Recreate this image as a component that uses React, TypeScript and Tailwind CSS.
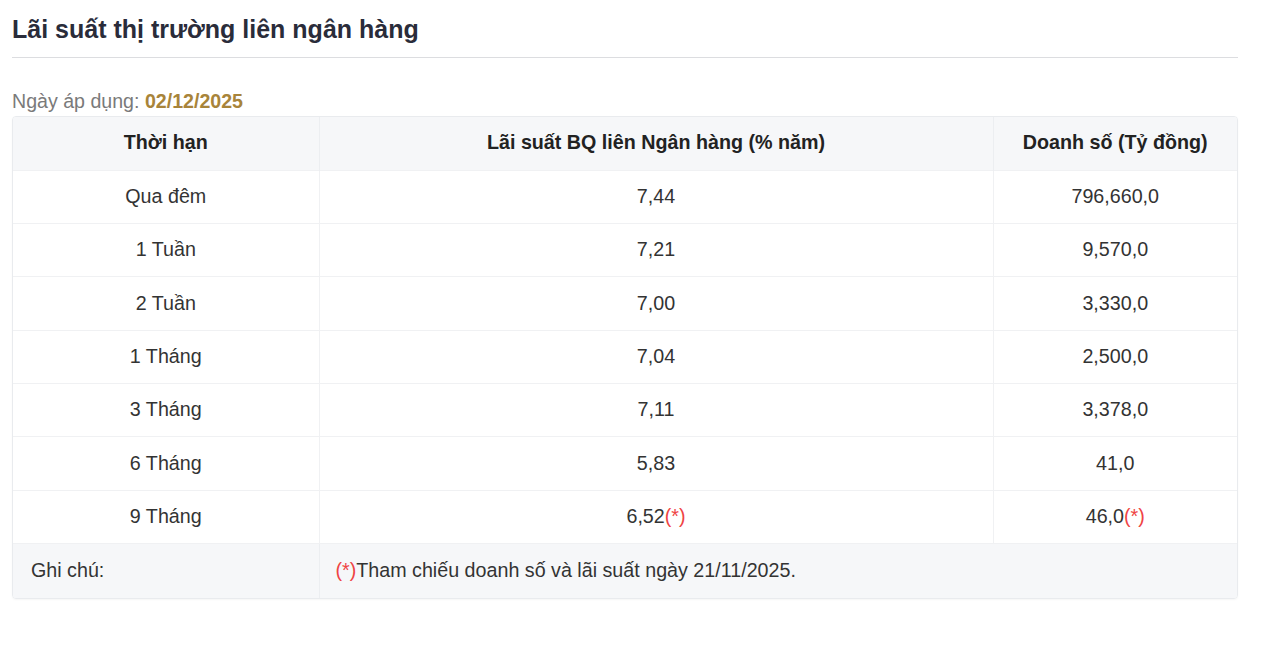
const rows: { term: string; rate: string; volume: string; rateNote?: boolean; volNote?: boolean }[] = [
  { term: 'Qua đêm', rate: '7,44', volume: '796,660,0' },
  { term: '1 Tuần', rate: '7,21', volume: '9,570,0' },
  { term: '2 Tuần', rate: '7,00', volume: '3,330,0' },
  { term: '1 Tháng', rate: '7,04', volume: '2,500,0' },
  { term: '3 Tháng', rate: '7,11', volume: '3,378,0' },
  { term: '6 Tháng', rate: '5,83', volume: '41,0' },
  { term: '9 Tháng', rate: '6,52', volume: '46,0', rateNote: true, volNote: true },
];

const Star = () => <span className="text-[#ef4444]">(*)</span>;

export default function App() {
  return (
    <div className="min-h-screen bg-white font-['Liberation_Sans',Arial,sans-serif] text-[#333]">
      <div className="w-[1226px] ml-3">
        {/* Title */}
        <h1 className="pt-[12px] pb-[11px] text-[25px] leading-[34px] font-bold text-[#2a2c3a] border-b border-[#dcdde0]">
          Lãi suất thị trường liên ngân hàng
        </h1>

        <p className="mt-[32px] text-[19.6px] leading-[22px] text-[#7a7a7a]">
          Ngày áp dụng: <span className="font-bold text-[#a8843a]">02/12/2025</span>
        </p>

        {/* Table */}
        <div className="mt-[4px] rounded-[4px] border border-[#e9ebee] overflow-hidden shadow-[0_1px_2px_rgba(0,0,0,0.04)]">
          <table className="w-full border-collapse text-[19.7px]">
            <colgroup>
              <col className="w-[306px]" />
              <col className="w-[674px]" />
              <col />
            </colgroup>
            <thead>
              <tr className="bg-[#f6f7f9] h-[53px]">
                <th className="font-bold text-[#222] text-center border-r border-[#eceef1]">Thời hạn</th>
                <th className="font-bold text-[#222] text-center border-r border-[#eceef1]">Lãi suất BQ liên Ngân hàng (% năm)</th>
                <th className="font-bold text-[#222] text-center">Doanh số (Tỷ đồng)</th>
              </tr>
            </thead>
            <tbody>
              {rows.map((r) => (
                <tr key={r.term} className="h-[53.4px] border-t border-[#f0f1f3]">
                  <td className="text-center border-r border-[#f0f1f3]">{r.term}</td>
                  <td className="text-center border-r border-[#f0f1f3]">
                    {r.rate}
                    {r.rateNote && <Star />}
                  </td>
                  <td className="text-center">
                    {r.volume}
                    {r.volNote && <Star />}
                  </td>
                </tr>
              ))}
              <tr className="h-[54px] bg-[#f6f7f9] border-t border-[#f0f1f3]">
                <td className="pl-[18px] border-r border-[#eceef1]">Ghi chú:</td>
                <td colSpan={2} className="pl-[16px]">
                  <Star />Tham chiếu doanh số và lãi suất ngày 21/11/2025.
                </td>
              </tr>
            </tbody>
          </table>
        </div>
      </div>
    </div>
  );
}
